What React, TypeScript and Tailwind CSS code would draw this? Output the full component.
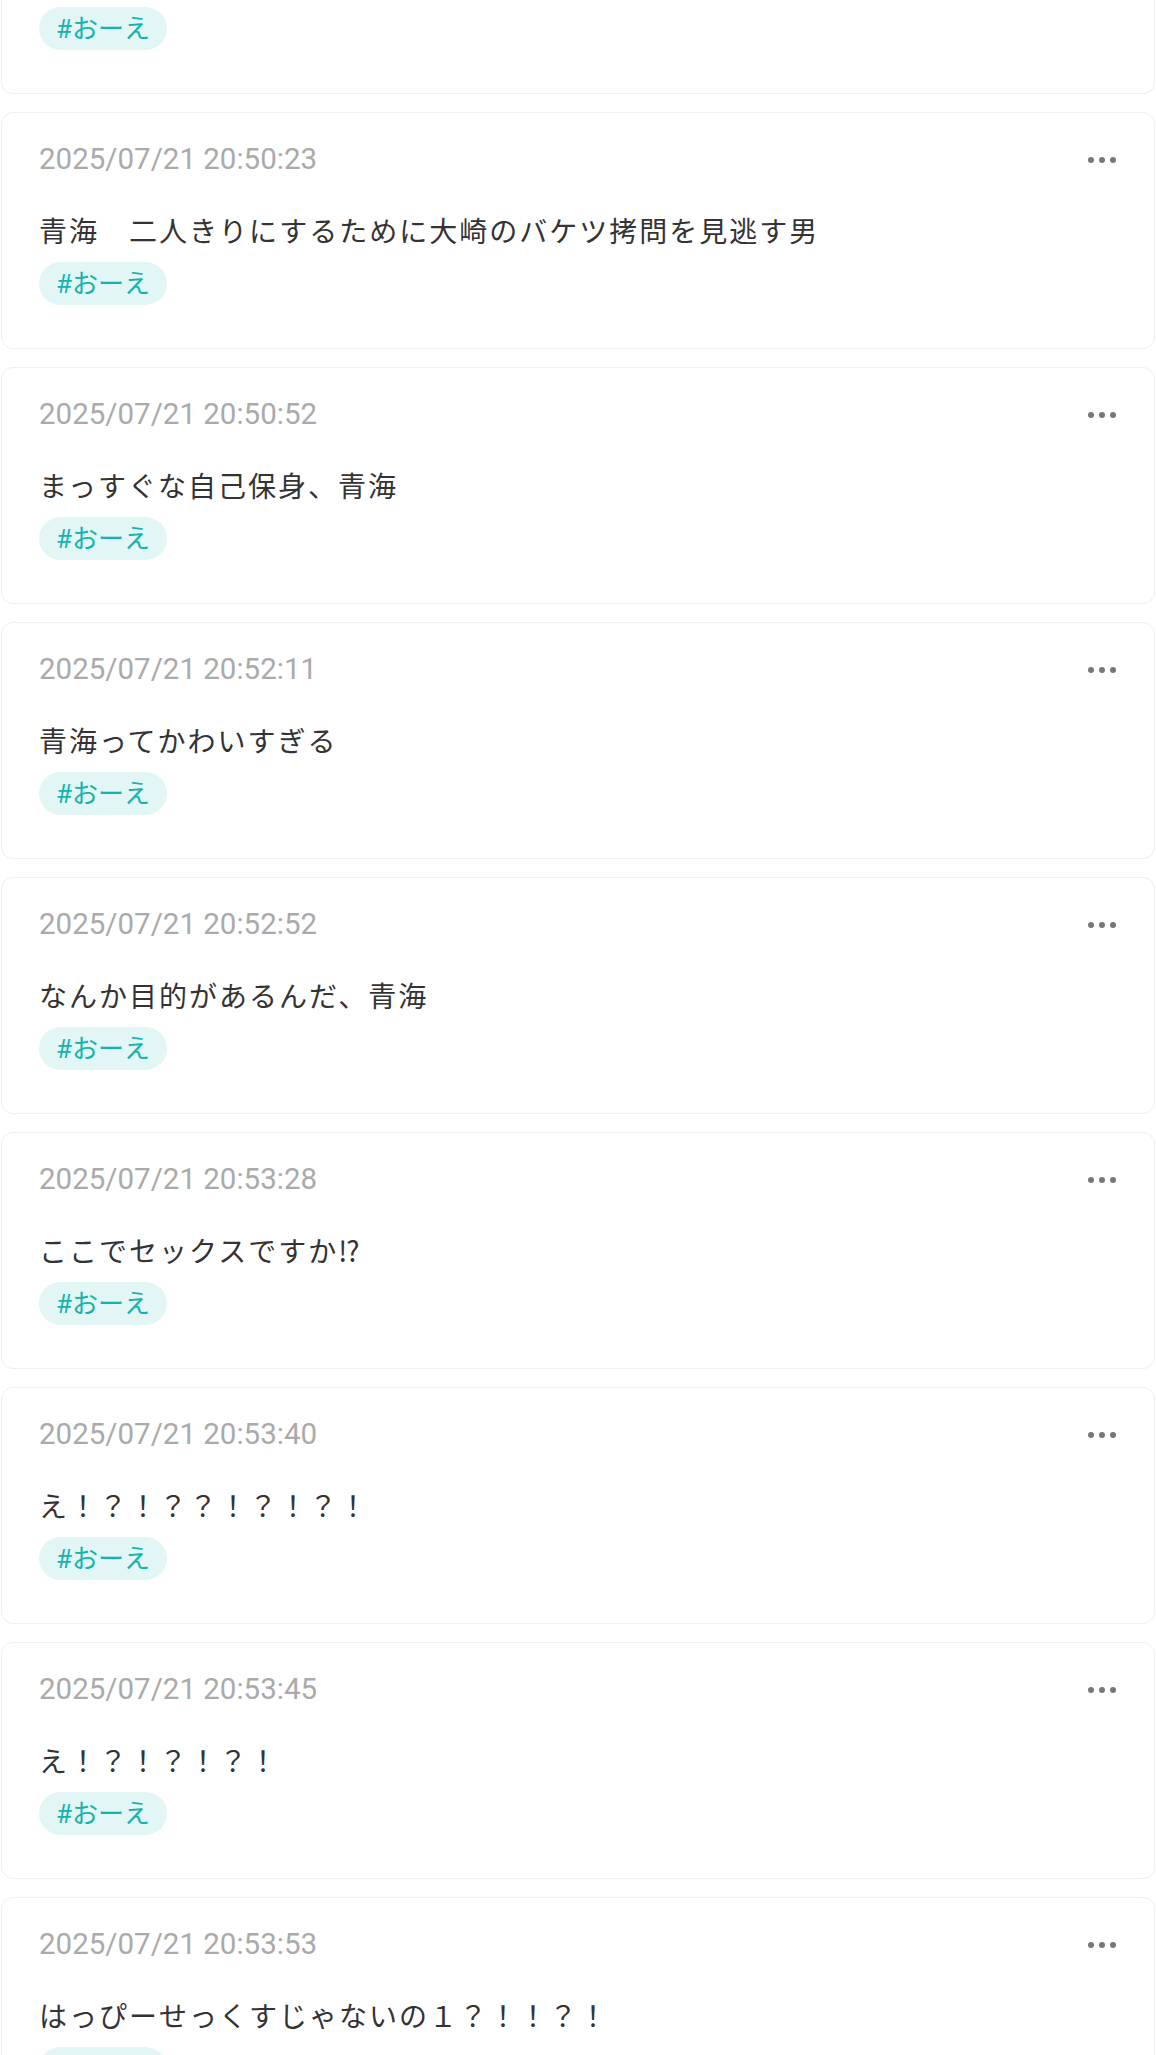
import React from "react";

const posts = [
  { date: "2025/07/21 20:50:23", text: "青海　二人きりにするために大崎のバケツ拷問を見逃す男" },
  { date: "2025/07/21 20:50:52", text: "まっすぐな自己保身、青海" },
  { date: "2025/07/21 20:52:11", text: "青海ってかわいすぎる" },
  { date: "2025/07/21 20:52:52", text: "なんか目的があるんだ、青海" },
  { date: "2025/07/21 20:53:28", text: "ここでセックスですか⁉" },
  { date: "2025/07/21 20:53:40", text: "え！？！？？！？！？！" },
  { date: "2025/07/21 20:53:45", text: "え！？！？！？！" },
  { date: "2025/07/21 20:53:53", text: "はっぴーせっくすじゃないの１？！！？！" },
];

function Tag() {
  return (
    <span className="inline-flex h-[43px] items-center rounded-full bg-[#e3f6f6] px-[17px] text-[26px] leading-none text-[#14b3ad]">
      #おーえ
    </span>
  );
}

function Dots() {
  return (
    <div className="flex items-center gap-[5px]">
      <span className="h-[6px] w-[6px] rounded-full bg-[#777777]" />
      <span className="h-[6px] w-[6px] rounded-full bg-[#777777]" />
      <span className="h-[6px] w-[6px] rounded-full bg-[#777777]" />
    </div>
  );
}

export default function App() {
  return (
    <div
      className="min-h-[2055px] w-full overflow-hidden bg-white"
      style={{ fontFamily: "Roboto, 'Noto Sans CJK JP', sans-serif" }}
    >
      <div className="flex flex-col gap-[18px] px-[1px]">
        <div className="rounded-b-[12px] border-x-[1.5px] border-b-[1.5px] border-[#efefef] px-[37px] pb-[43px] pt-[7px]">
          <Tag />
        </div>
        {posts.map((p) => (
          <div
            key={p.date}
            className="rounded-[12px] border-[1.5px] border-[#efefef] bg-white pb-[43px] pl-[37px] pr-[38px] pt-[26px]"
          >
            <div className="flex h-[42px] items-center justify-between">
              <span className="text-[29.5px] leading-none text-[#aaaaaa]">{p.date}</span>
              <Dots />
            </div>
            <p className="mt-[30px] text-[28px] leading-[44px] tracking-[2px] text-[#333333]">{p.text}</p>
            <div className="mt-[7px]">
              <Tag />
            </div>
          </div>
        ))}
      </div>
    </div>
  );
}
